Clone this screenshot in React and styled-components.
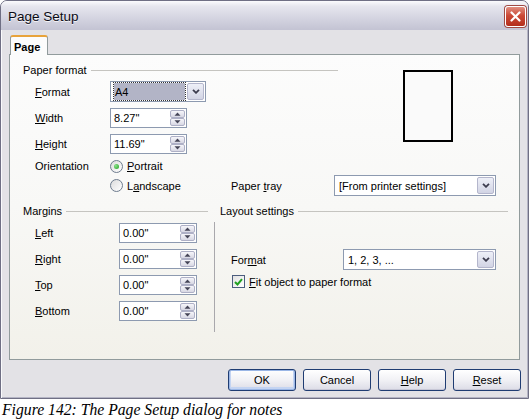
import styled, { createGlobalStyle } from "styled-components";

const GlobalStyle = createGlobalStyle`
  html, body { margin: 0; padding: 0; background: #fff; }
  body {
    font-family: "Liberation Sans", Arial, sans-serif;
    font-size: 11px;
    color: #000;
  }
  * { box-sizing: border-box; }
`;

const Screen = styled.div`
  width: 530px;
  height: 420px;
  overflow: hidden;
`;

const Window = styled.div`
  width: 529px;
  height: 399px;
  display: flex;
  flex-direction: column;
  border: 1px solid #6f6f84;
  border-radius: 7px 7px 0 0;
  background: #e3e2e6;
  box-shadow: inset 1px 0 0 #fafafc, inset -1px 0 0 #b4b4c4, inset 0 -1px 0 #b4b4c4;
`;

const TitleBar = styled.div`
  height: 29px;
  flex-shrink: 0;
  display: flex;
  align-items: center;
  justify-content: space-between;
  padding: 2px 2px 0 7px;
  border-radius: 6px 6px 0 0;
  background: linear-gradient(#fbfbfd 0%, #e6e6ee 18%, #d6d6e2 55%, #c3c3d3 100%);
`;

const Title = styled.span`
  font-size: 13.5px;
  color: #0a0a14;
  text-shadow: 0 1px 0 rgba(255, 255, 255, 0.8);
`;

const CloseButton = styled.div`
  width: 21px;
  height: 21px;
  display: flex;
  align-items: center;
  justify-content: center;
  border: 1px solid #fff;
  border-radius: 3px;
  background: linear-gradient(#e08e80 0%, #cc4a37 45%, #b32e1c 100%);
  box-shadow: 0 0 0 1px #a04a44;
`;

const Body = styled.div`
  flex: 1;
  display: flex;
  flex-direction: column;
  padding: 5px 8px 0 8px;
`;

const TabStrip = styled.div`
  display: flex;
  height: 19px;
  padding-left: 1px;
  position: relative;
  z-index: 1;
`;

const Tab = styled.div`
  width: 38px;
  height: 20px;
  padding: 4px 0 0 3px;
  font-weight: bold;
  background: #fcfcfc;
  border: 1px solid #919b9c;
  border-top: 2px solid #e8a33a;
  border-bottom: none;
  border-radius: 3px 3px 0 0;
`;

const Panel = styled.div`
  height: 306px;
  display: flex;
  flex-direction: column;
  padding: 8px 0 0 13px;
  border: 1px solid #919b9c;
  background: linear-gradient(#fcfcfc 0%, #f8f8f6 50%, #f2f1ea 100%);
`;

const Section = styled.div`
  display: flex;
  margin-top: ${({ $mt }) => $mt || 0}px;
`;

const Column = styled.div`
  display: flex;
  flex-direction: column;
  width: ${({ $w }) => ($w ? `${$w}px` : "auto")};
  flex: ${({ $w }) => ($w ? "none" : 1)};
  margin-left: ${({ $ml }) => $ml || 0}px;
`;

const GroupHeader = styled.div`
  height: 14px;
  display: flex;
  align-items: center;
  gap: 4px;
  padding-left: ${({ $pl }) => $pl || 0}px;
  &::after {
    content: "";
    flex: 1;
    height: 1px;
    background: #c5c4c0;
  }
`;

const Row = styled.div`
  display: flex;
  align-items: center;
  height: ${({ $h }) => $h}px;
  margin-top: ${({ $mt }) => $mt || 0}px;
  padding-left: ${({ $pl }) => ($pl === undefined ? 12 : $pl)}px;
  flex-shrink: 0;
`;

const Label = styled.span`
  width: ${({ $w }) => $w}px;
  flex-shrink: 0;
  white-space: nowrap;
`;

const Key = styled.span`
  text-decoration: underline;
  text-underline-offset: 1px;
`;

const Field = styled.div`
  width: ${({ $w }) => $w}px;
  height: ${({ $h }) => $h || 20}px;
  display: flex;
  align-items: center;
  justify-content: space-between;
  padding: 1px 1px 1px 3px;
  background: #fff;
  border: 1px solid #8d9ab0;
`;

const SpinBox = styled.div`
  display: flex;
  flex-direction: column;
`;

const SpinButton = styled.div`
  width: 15px;
  height: 8px;
  display: flex;
  align-items: center;
  justify-content: center;
  border: 1px solid #aeb0c6;
  border-radius: 2px;
  background: linear-gradient(#f6f6fa, #d8d8e4);
`;

const ComboValue = styled.div`
  flex: 1;
  height: 100%;
  display: flex;
  align-items: center;
  padding-left: 1px;
  margin-right: 2px;
  white-space: nowrap;
  background: ${({ $selected }) => ($selected ? "#b2b4c6" : "transparent")};
  outline: ${({ $selected }) => ($selected ? "1px dotted #333" : "none")};
`;

const DropButton = styled.div`
  width: 17px;
  height: 100%;
  flex-shrink: 0;
  display: flex;
  align-items: center;
  justify-content: center;
  border: 1px solid #b4b6cc;
  border-radius: 2px;
  background: linear-gradient(#eef0f8, #d2d4e4);
`;

const Option = styled.div`
  display: flex;
  align-items: center;
  gap: 4px;
  width: ${({ $w }) => ($w ? `${$w}px` : "auto")};
  flex-shrink: 0;
`;

const Radio = styled.div`
  width: 13px;
  height: 13px;
  border-radius: 50%;
  border: 1px solid #6e7c8e;
  background: linear-gradient(135deg, #dcdcdc, #fff);
  display: flex;
  align-items: center;
  justify-content: center;
  &::after {
    content: "";
    display: ${({ $checked }) => ($checked ? "block" : "none")};
    width: 5px;
    height: 5px;
    border-radius: 50%;
    background: radial-gradient(circle at 35% 35%, #8be28b, #21a121);
  }
`;

const Checkbox = styled.div`
  width: 13px;
  height: 13px;
  display: flex;
  align-items: center;
  justify-content: center;
  border: 1px solid #4b5d7e;
  background: linear-gradient(135deg, #e2e2e2, #fff);
`;

const Preview = styled.div`
  width: 50px;
  height: 72px;
  margin: 7px 0 0 65px;
  border: 2px solid #000;
  background: #fafafa;
`;

const LayoutBody = styled.div`
  height: 110px;
  margin-top: 4px;
  padding-left: 16px;
  border-left: 1px solid #a9a8ac;
  display: flex;
  flex-direction: column;
`;

const ButtonRow = styled.div`
  display: flex;
  justify-content: flex-end;
  gap: 7px;
  margin: 9px -1px 0 0;
`;

const Button = styled.div`
  width: 68px;
  height: 22px;
  display: flex;
  align-items: center;
  justify-content: center;
  border: 1px solid #1f3c72;
  border-radius: 3px;
  background: linear-gradient(#ffffff 0%, #f1f1f5 50%, #dcdce6 100%);
  box-shadow: ${({ $default }) =>
    $default ? "inset 0 0 0 1px #9ab6e6, inset 0 -1px 0 2px #c4d4f2" : "inset 0 -1px 0 #c7c7d6"};
`;

const Caption = styled.div`
  padding: 1px 0 0 2px;
  font-family: "Liberation Serif", "Times New Roman", serif;
  font-style: italic;
  font-size: 15.7px;
  line-height: 20px;
  color: #000;
`;

const Chevron = () => (
  <svg width="8" height="5" viewBox="0 0 8 5">
    <path d="M1 0.8 L4 3.8 L7 0.8" fill="none" stroke="#3c3c4e" strokeWidth="1.8" />
  </svg>
);

const Arrow = ({ up }) => (
  <svg width="7" height="4" viewBox="0 0 7 4">
    <path d={up ? "M0.5 3.8 L3.5 0.5 L6.5 3.8 Z" : "M0.5 0.2 L3.5 3.5 L6.5 0.2 Z"} fill="#444456" />
  </svg>
);

const SpinField = ({ value, w }) => (
  <Field $w={w}>
    <span>{value}</span>
    <SpinBox>
      <SpinButton>
        <Arrow up />
      </SpinButton>
      <SpinButton>
        <Arrow />
      </SpinButton>
    </SpinBox>
  </Field>
);

const Combo = ({ value, w, selected }) => (
  <Field $w={w} $h={21}>
    <ComboValue $selected={selected}>{value}</ComboValue>
    <DropButton>
      <Chevron />
    </DropButton>
  </Field>
);

const margins = [
  { key: "L", rest: "eft" },
  { key: "R", rest: "ight" },
  { key: "T", rest: "op" },
  { key: "B", rest: "ottom" },
];

export default function App() {
  return (
    <Screen>
      <GlobalStyle />
      <Window>
        <TitleBar>
          <Title>Page Setup</Title>
          <CloseButton>
            <svg width="11" height="11" viewBox="0 0 11 11">
              <path d="M1.5 1.5 L9.5 9.5 M9.5 1.5 L1.5 9.5" stroke="#fff" strokeWidth="2.2" strokeLinecap="round" />
            </svg>
          </CloseButton>
        </TitleBar>
        <Body>
          <TabStrip>
            <Tab>Page</Tab>
          </TabStrip>
          <Panel>
            <Section>
              <Column $w={315}>
                <GroupHeader>Paper format</GroupHeader>
                <Row $h={21} $mt={4}>
                  <Label $w={75}>
                    <Key>F</Key>ormat
                  </Label>
                  <Combo value="A4" w={96} selected />
                </Row>
                <Row $h={20} $mt={6}>
                  <Label $w={75}>
                    <Key>W</Key>idth
                  </Label>
                  <SpinField value={'8.27"'} w={77} />
                </Row>
                <Row $h={20} $mt={6}>
                  <Label $w={75}>
                    <Key>H</Key>eight
                  </Label>
                  <SpinField value={'11.69"'} w={77} />
                </Row>
                <Row $h={18} $mt={3}>
                  <Label $w={75}>Orientation</Label>
                  <Option>
                    <Radio $checked />
                    <span>
                      <Key>P</Key>ortrait
                    </span>
                  </Option>
                </Row>
              </Column>
              <Preview />
            </Section>
            <Row $h={21}>
              <Label $w={75} />
              <Option $w={121}>
                <Radio />
                <span>
                  L<Key>a</Key>ndscape
                </span>
              </Option>
              <Label $w={103}>
                Paper <Key>t</Key>ray
              </Label>
              <Combo value="[From printer settings]" w={162} />
            </Row>
            <Section $mt={8}>
              <Column $w={185}>
                <GroupHeader>Margins</GroupHeader>
                {margins.map((m, i) => (
                  <Row key={m.key} $h={20} $mt={i === 0 ? 5 : 6}>
                    <Label $w={84}>
                      <Key>{m.key}</Key>
                      {m.rest}
                    </Label>
                    <SpinField value={'0.00"'} w={78} />
                  </Row>
                ))}
              </Column>
              <Column $w={294} $ml={6}>
                <GroupHeader $pl={6}>Layout settings</GroupHeader>
                <LayoutBody>
                  <Row $h={21} $mt={27} $pl={0}>
                    <Label $w={112}>
                      For<Key>m</Key>at
                    </Label>
                    <Combo value="1, 2, 3, ..." w={153} />
                  </Row>
                  <Row $h={13} $mt={5} $pl={1}>
                    <Option>
                      <Checkbox>
                        <svg width="9" height="8" viewBox="0 0 9 8">
                          <path d="M1 4 L3.5 6.5 L8 1.2" fill="none" stroke="#21a121" strokeWidth="2" />
                        </svg>
                      </Checkbox>
                      <span>
                        <Key>F</Key>it object to paper format
                      </span>
                    </Option>
                  </Row>
                </LayoutBody>
              </Column>
            </Section>
          </Panel>
          <ButtonRow>
            <Button $default>OK</Button>
            <Button>Cancel</Button>
            <Button>
              <span>
                <Key>H</Key>elp
              </span>
            </Button>
            <Button>
              <span>
                <Key>R</Key>eset
              </span>
            </Button>
          </ButtonRow>
        </Body>
      </Window>
      <Caption>Figure 142: The Page Setup dialog for notes</Caption>
    </Screen>
  );
}
